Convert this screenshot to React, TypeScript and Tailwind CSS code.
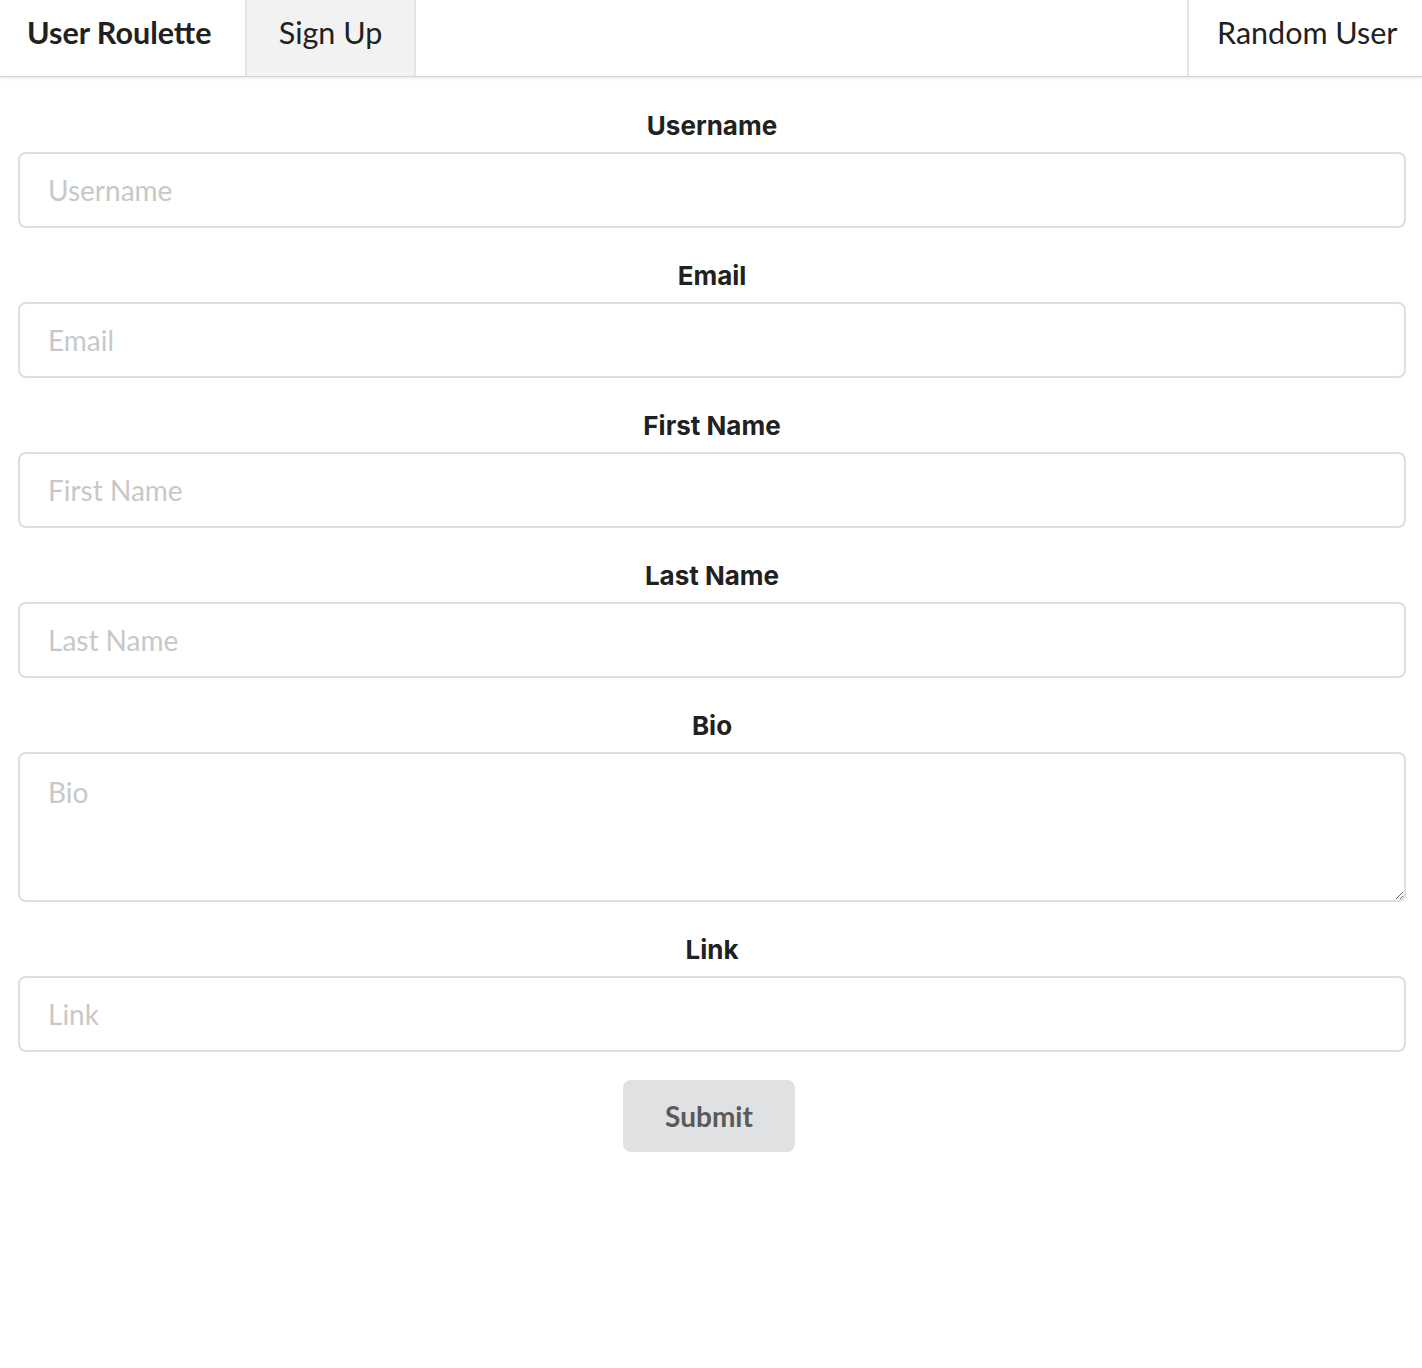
import React from "react";

const fields = [
  { label: "Username", type: "input" },
  { label: "Email", type: "input" },
  { label: "First Name", type: "input" },
  { label: "Last Name", type: "input" },
  { label: "Bio", type: "textarea" },
  { label: "Link", type: "input" },
];

const App = () => {
  return (
    <div className="min-h-[1368px] bg-white font-['Lato',sans-serif] text-[#212121]">
      <header className="flex h-[77px] border-b border-[#d4d4d5] bg-white shadow-[0_1px_3px_rgba(34,36,38,0.12)]">
        <div className="flex w-[245px] items-center pb-[10px] pl-[27px] text-[30.5px] font-bold">
          User Roulette
        </div>
        <div className="flex w-[171px] items-center justify-center border-x-2 border-[#e4e4e5] bg-[#f2f2f2] pb-[10px] text-[30.5px]">
          Sign Up
        </div>
        <div className="flex-1"></div>
        <div className="flex w-[235px] items-center border-l-2 border-[#e4e4e5] pb-[10px] pl-[28px] text-[30.5px]">
          Random User
        </div>
      </header>

      <form className="flex flex-col pl-[18px] pr-[16px] pt-[33px]">
        {fields.map(({ label, type }) => (
          <div key={label} className="mb-[32px] flex flex-col">
            <label className="mb-[10px] text-center font-['Inter',sans-serif] text-[26px] leading-[32px] font-bold text-[#212121]">
              {label}
            </label>
            {type === "textarea" ? (
              <textarea
                placeholder={label}
                className="h-[150px] w-full resize-y rounded-[8px] border-2 border-[#dedede] px-[28px] py-[22px] text-[28px] leading-[32px] outline-none placeholder:text-[#c8c8c8]"
              />
            ) : (
              <input
                placeholder={label}
                className="h-[76px] w-full rounded-[8px] border-2 border-[#dedede] px-[28px] text-[28px] outline-none placeholder:text-[#c8c8c8]"
              />
            )}
          </div>
        ))}
        <div className="-mt-[4px] flex justify-center">
          <button
            type="button"
            className="ml-[-6px] h-[72px] w-[172px] rounded-[8px] bg-[#e0e1e2] text-[28px] font-bold text-[#5a5a5a]"
          >
            Submit
          </button>
        </div>
      </form>
    </div>
  );
};

export default App;
